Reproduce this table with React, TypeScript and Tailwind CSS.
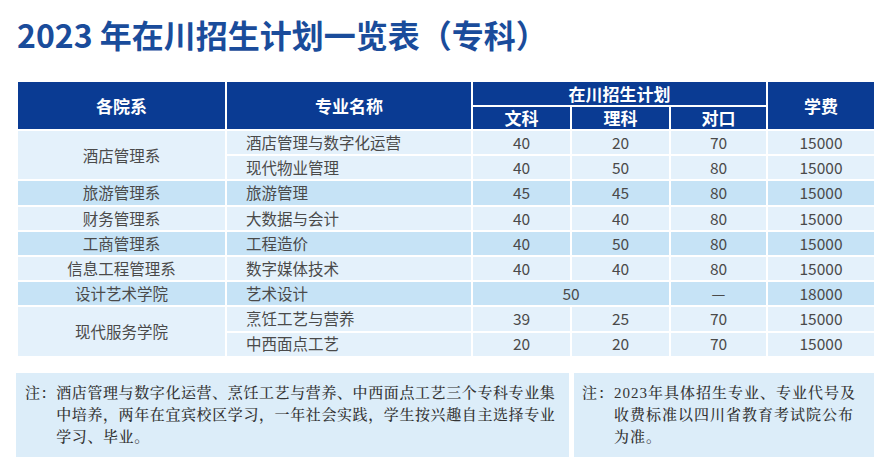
import React from "react";

const sans = "font-['Noto_Sans_CJK_SC','Noto_Sans',sans-serif]";

type Row = {
  dept?: string;
  span?: number;
  major: string;
  a: string;
  b?: string;
  c: string;
  fee: string;
  dark: boolean;
  merged?: boolean;
};

const rows: Row[] = [
  { dept: "酒店管理系", span: 2, major: "酒店管理与数字化运营", a: "40", b: "20", c: "70", fee: "15000", dark: false },
  { major: "现代物业管理", a: "40", b: "50", c: "80", fee: "15000", dark: false },
  { dept: "旅游管理系", major: "旅游管理", a: "45", b: "45", c: "80", fee: "15000", dark: true },
  { dept: "财务管理系", major: "大数据与会计", a: "40", b: "40", c: "80", fee: "15000", dark: false },
  { dept: "工商管理系", major: "工程造价", a: "40", b: "50", c: "80", fee: "15000", dark: true },
  { dept: "信息工程管理系", major: "数字媒体技术", a: "40", b: "40", c: "80", fee: "15000", dark: false },
  { dept: "设计艺术学院", major: "艺术设计", a: "50", merged: true, c: "—", fee: "18000", dark: true },
  { dept: "现代服务学院", span: 2, major: "烹饪工艺与营养", a: "39", b: "25", c: "70", fee: "15000", dark: false },
  { major: "中西面点工艺", a: "20", b: "20", c: "70", fee: "15000", dark: false },
];

function Cell({
  children,
  dark,
  className = "",
}: {
  children: React.ReactNode;
  dark: boolean;
  className?: string;
}) {
  return (
    <div
      className={`flex items-center justify-center ${dark ? "bg-[#c6e3f6]" : "bg-[#e4f1fb]"} ${className}`}
    >
      {children}
    </div>
  );
}

export default function App() {
  return (
    <div className={`w-[886px] h-[467px] bg-white overflow-hidden ${sans}`}>
      <h1 className="pl-[17px] pt-[12px] h-[82px] text-[32px] leading-[44px] font-bold text-[#1a4c9b] whitespace-nowrap">
        2023 年在川招生计划一览表（专科）
      </h1>

      <div className="ml-[18px] w-[856px] grid grid-cols-[207px_244px_97px_97px_95px_106px] grid-rows-[23px_22px_repeat(9,23.2px)] gap-[2px] bg-white text-[15.5px] text-[#4a4a4a]">
        <div className="row-span-2 bg-[#0a3b93] text-white font-bold text-[17px] flex items-center justify-center">各院系</div>
        <div className="row-span-2 bg-[#0a3b93] text-white font-bold text-[17px] flex items-center justify-center">专业名称</div>
        <div className="col-span-3 bg-[#0a3b93] text-white font-bold text-[17px] flex items-center justify-center">在川招生计划</div>
        <div className="row-span-2 bg-[#0a3b93] text-white font-bold text-[17px] flex items-center justify-center">学费</div>
        <div className="bg-[#0a3b93] text-white font-bold text-[17px] flex items-center justify-center">文科</div>
        <div className="bg-[#0a3b93] text-white font-bold text-[17px] flex items-center justify-center">理科</div>
        <div className="bg-[#0a3b93] text-white font-bold text-[17px] flex items-center justify-center">对口</div>

        {rows.map((r, i) => (
          <React.Fragment key={i}>
            {r.dept && (
              <Cell dark={r.dark} className={r.span === 2 ? "row-span-2" : ""}>
                {r.dept}
              </Cell>
            )}
            <Cell dark={r.dark} className="!justify-start pl-[19px]">
              {r.major}
            </Cell>
            {r.merged ? (
              <Cell dark={r.dark} className="col-span-2">
                {r.a}
              </Cell>
            ) : (
              <>
                <Cell dark={r.dark}>{r.a}</Cell>
                <Cell dark={r.dark}>{r.b}</Cell>
              </>
            )}
            <Cell dark={r.dark}>{r.c}</Cell>
            <Cell dark={r.dark}>{r.fee}</Cell>
          </React.Fragment>
        ))}
      </div>

      <div className="mt-[17px] ml-[16px] flex gap-[5px] font-['Liberation_Serif','Noto_Serif_CJK_SC','Noto_Sans_CJK_SC',serif] text-[15px] leading-[22px] text-[#333]">
        <div className="w-[553px] h-[84px] bg-[#dcedf9] pt-[9px] pl-[9px] flex tracking-[0.6px] font-medium">
          <span className="shrink-0">注：</span>
          <span>
            酒店管理与数字化运营、烹饪工艺与营养、中西面点工艺三个专科专业集
            <br />
            中培养，两年在宜宾校区学习，一年社会实践，学生按兴趣自主选择专业
            <br />
            学习、毕业。
          </span>
        </div>
        <div className="w-[300px] h-[84px] bg-[#dcedf9] pt-[9px] pl-[8px] flex tracking-[1px] font-medium">
          <span className="shrink-0">注：</span>
          <span>
            2023年具体招生专业、专业代号及
            <br />
            收费标准以四川省教育考试院公布
            <br />
            为准。
          </span>
        </div>
      </div>
    </div>
  );
}
